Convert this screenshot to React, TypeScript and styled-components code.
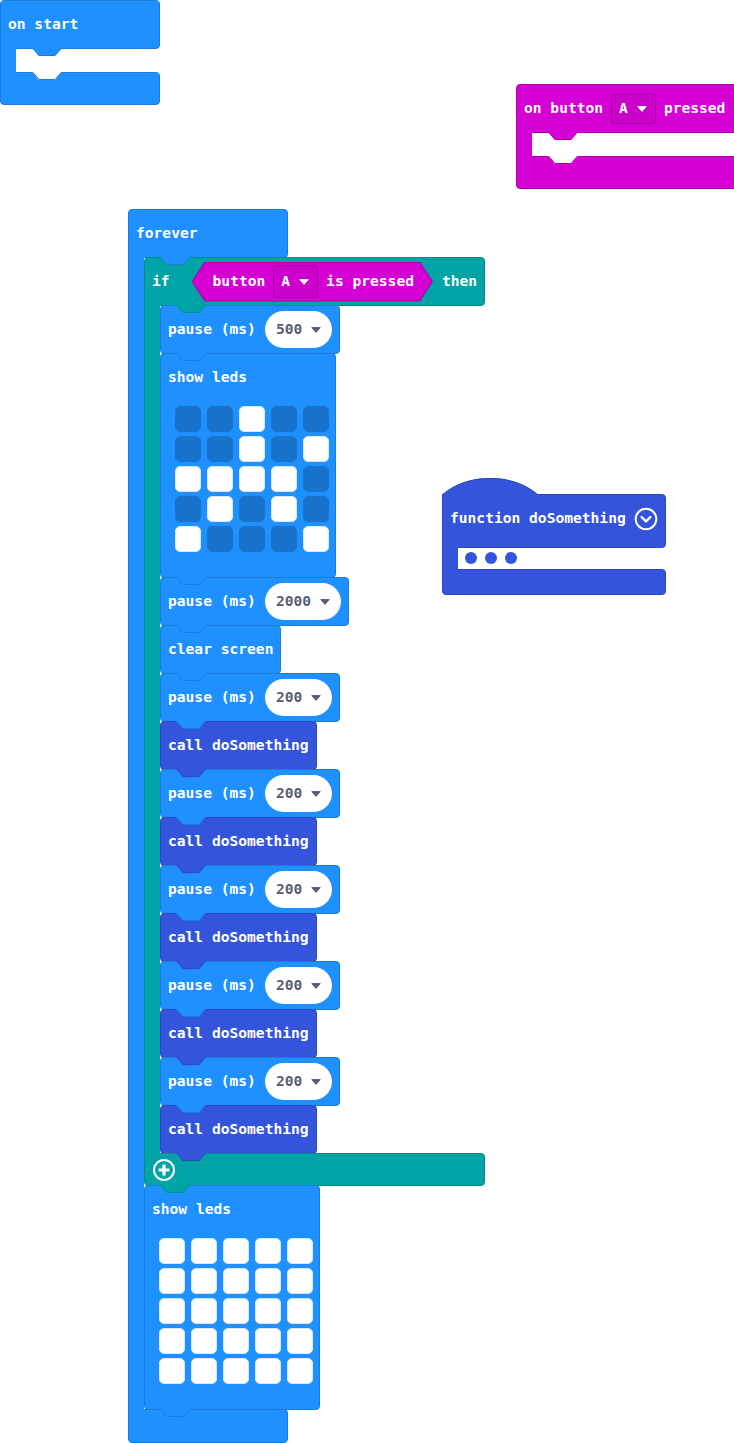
import React from "react";
import styled, { createGlobalStyle } from "styled-components";

type Tone = { fill: string; line: string };

const BASIC: Tone = { fill: "#1e90ff", line: "#1a7bd9" };
const LOGIC: Tone = { fill: "#00a4a6", line: "#008c8e" };
const INPUT: Tone = { fill: "#d400d4", line: "#b000b0" };
const FUNC: Tone = { fill: "#3455db", line: "#2a47bd" };
const LED_OFF = "#1873cc";
const FIELD_TEXT = "#575e75";

const GlobalStyle = createGlobalStyle`
  * { box-sizing: border-box; }
  html, body { margin: 0; background: #fff; }
  body { font-family: "DejaVu Sans Mono", "Liberation Mono", monospace; }
`;

const Canvas = styled.div`
  position: relative;
  width: 734px;
  height: 1443px;
  overflow: hidden;
  background: #fff;
`;

// top-level blocks sit on a free workspace canvas
const Placed = styled.div<{ $x: number; $y: number }>`
  position: absolute;
  left: ${(p) => p.$x}px;
  top: ${(p) => p.$y}px;
`;

const Label = styled.span`
  color: #fff;
  font-weight: 700;
  font-size: 14.6px;
  line-height: 1;
  white-space: pre;
`;

const CBlock = styled.div`
  display: flex;
  flex-direction: column;
  align-items: flex-start;
`;

const Head = styled.div<{ $t: Tone; $w?: number; $h?: number }>`
  position: relative;
  display: flex;
  align-items: center;
  gap: 8px;
  height: ${(p) => (p.$h ?? 48) + 1}px;
  ${(p) => (p.$w ? `min-width: ${p.$w}px;` : "")}
  margin-bottom: -1px;
  padding: 0 7px;
  background: ${(p) => p.$t.fill};
  border: 1px solid ${(p) => p.$t.line};
  border-radius: 4px 4px 4px 0;
`;

const FuncHead = styled(Head)`
  justify-content: space-between;
  padding-bottom: 5px;
  border-radius: 0 4px 4px 0;
`;

const Mouth = styled.div`
  display: flex;
  align-self: stretch;
`;

const Spine = styled.div<{ $t: Tone }>`
  position: relative;
  z-index: 1;
  flex: none;
  width: 16px;
  margin: -1px 0;
  background: ${(p) => p.$t.fill};
  border-left: 1px solid ${(p) => p.$t.line};
`;

const Stack = styled.div`
  display: flex;
  flex-direction: column;
  align-items: flex-start;
`;

const EmptySlot = styled.div`
  position: relative;
  width: 40px;
  height: 24px;
`;

const Foot = styled.div<{ $t: Tone; $w: number; $h: number }>`
  position: relative;
  display: flex;
  align-items: center;
  width: ${(p) => p.$w}px;
  height: ${(p) => p.$h + 1}px;
  margin-bottom: -1px;
  padding-left: 7px;
  background: ${(p) => p.$t.fill};
  border: 1px solid ${(p) => p.$t.line};
  border-radius: 0 4px 4px 4px;
`;

const Stmt = styled.div<{ $t: Tone }>`
  position: relative;
  display: flex;
  align-items: center;
  gap: 9px;
  height: 49px;
  margin-bottom: -1px;
  padding: 0 7px;
  background: ${(p) => p.$t.fill};
  border: 1px solid ${(p) => p.$t.line};
  border-radius: 4px;
`;

const LedBlock = styled.div`
  position: relative;
  display: flex;
  flex-direction: column;
  width: 176px;
  height: 225px;
  margin-bottom: -1px;
  background: ${BASIC.fill};
  border: 1px solid ${BASIC.line};
  border-radius: 4px;
`;

const LedTitle = styled.div`
  display: flex;
  align-items: center;
  height: 47px;
  padding-left: 7px;
`;

const LedGrid = styled.div`
  display: grid;
  grid-template-columns: repeat(5, 26px);
  grid-auto-rows: 26px;
  column-gap: 6px;
  row-gap: 4px;
  margin: 5px 0 0 14px;
`;

const Led = styled.div<{ $on: boolean }>`
  border-radius: 5px;
  background: ${(p) => (p.$on ? "#fff" : LED_OFF)};
  border: 1px solid ${(p) => (p.$on ? "#d6e9ff" : LED_OFF)};
`;

const Oval = styled.span`
  display: inline-flex;
  align-items: center;
  gap: 9px;
  height: 37px;
  padding: 0 11px;
  border-radius: 19px;
  background: #fff;
  color: ${FIELD_TEXT};
  font-weight: 700;
  font-size: 14.6px;
  line-height: 1;
`;

const Picker = styled.span<{ $h: number }>`
  display: inline-flex;
  align-items: center;
  gap: 9px;
  height: ${(p) => p.$h}px;
  padding: 0 8px 0 7px;
  border: 1px solid rgba(0, 0, 0, 0.18);
  border-radius: 4px;
  background: rgba(0, 0, 0, 0.04);
`;

const Hex = styled.span`
  position: relative;
  display: inline-flex;
  align-items: center;
  gap: 8px;
  height: 40px;
  margin: 0 1px 0 14px;
  padding: 0 19px 0 21px;
  background: ${INPUT.line};
  clip-path: polygon(13px 0, calc(100% - 13px) 0, 100% 50%, calc(100% - 13px) 100%, 13px 100%, 0 50%);

  &::before {
    content: "";
    position: absolute;
    inset: 1px 1.6px;
    z-index: -1;
    background: ${INPUT.fill};
    clip-path: polygon(12.4px 0, calc(100% - 12.4px) 0, 100% 50%, calc(100% - 12.4px) 100%, 12.4px 100%, 0 50%);
  }
`;

const ArgSlot = styled.div`
  display: flex;
  align-items: center;
  gap: 8px;
  height: 22px;
  padding-left: 7px;
`;

const Dot = styled.span`
  width: 12px;
  height: 12px;
  border-radius: 50%;
  background: ${FUNC.fill};
`;

const TabSvg = styled.svg<{ $x: number }>`
  position: absolute;
  top: 100%;
  left: ${(p) => p.$x}px;
  z-index: 2;
  overflow: visible;
`;

const HatSvg = styled.svg`
  position: relative;
  z-index: 1;
  display: block;
  margin-bottom: -2px;
`;

function Tab({ t, x, fill }: { t: Tone; x: number; fill?: string }) {
  return (
    <TabSvg $x={x} width="30" height="8" viewBox="0 0 30 8">
      <path d="M0 0 L7 8 H23 L30 0 Z" fill={fill ?? t.fill} />
      <path d="M0.5 0 L7 7.5 H23 L29.5 0" fill="none" stroke={t.line} />
    </TabSvg>
  );
}

function Caret({ color }: { color: string }) {
  return (
    <svg width="10" height="6" viewBox="0 0 10 6">
      <path d="M0.8 0.6 H9.2 L5 5.4 Z" fill={color} stroke={color} strokeLinejoin="round" />
    </svg>
  );
}

function PlusCircle() {
  return (
    <svg width="24" height="24" viewBox="0 0 24 24" fill="none" stroke="#fff">
      <circle cx="12" cy="12" r="10" strokeWidth="2" />
      <path d="M12 6.5v11M6.5 12h11" strokeWidth="3.2" />
    </svg>
  );
}

function ChevronCircle() {
  return (
    <svg width="24" height="24" viewBox="0 0 24 24" fill="none" stroke="#fff" strokeWidth="2">
      <circle cx="12" cy="12" r="10.3" />
      <path d="M7.6 10 L12 14.4 L16.4 10" strokeWidth="2.4" strokeLinecap="round" strokeLinejoin="round" />
    </svg>
  );
}

function Pause({ ms }: { ms: number }) {
  return (
    <Stmt $t={BASIC}>
      <Label>pause (ms)</Label>
      <Oval>
        {ms}
        <Caret color={FIELD_TEXT} />
      </Oval>
      <Tab t={BASIC} x={15} />
    </Stmt>
  );
}

function Call() {
  return (
    <Stmt $t={FUNC}>
      <Label>call doSomething</Label>
      <Tab t={FUNC} x={15} />
    </Stmt>
  );
}

function ShowLeds({ rows }: { rows: string[] }) {
  return (
    <LedBlock>
      <LedTitle>
        <Label>show leds</Label>
      </LedTitle>
      <LedGrid>
        {rows.flatMap((r, y) => r.split("").map((c, x) => <Led key={`${y}-${x}`} $on={c === "#"} />))}
      </LedGrid>
      <Tab t={BASIC} x={15} />
    </LedBlock>
  );
}

const arrow = ["..#..", "..#.#", "####.", ".#.#.", "#...#"];
const allOn = ["#####", "#####", "#####", "#####", "#####"];

export default function App() {
  return (
    <Canvas>
      <GlobalStyle />

      <Placed $x={0} $y={0}>
        <CBlock>
          <Head $t={BASIC} $w={160}>
            <Label>on start</Label>
            <Tab t={BASIC} x={31} />
          </Head>
          <Mouth>
            <Spine $t={BASIC} />
            <EmptySlot>
              <Tab t={BASIC} x={16} fill="#fff" />
            </EmptySlot>
          </Mouth>
          <Foot $t={BASIC} $w={160} $h={32} />
        </CBlock>
      </Placed>

      <Placed $x={516} $y={84}>
        <CBlock>
          <Head $t={INPUT} $w={222}>
            <Label>on button</Label>
            <Picker $h={31}>
              <Label>A</Label>
              <Caret color="#fff" />
            </Picker>
            <Label>pressed</Label>
            <Tab t={INPUT} x={31} />
          </Head>
          <Mouth>
            <Spine $t={INPUT} />
            <EmptySlot>
              <Tab t={INPUT} x={16} fill="#fff" />
            </EmptySlot>
          </Mouth>
          <Foot $t={INPUT} $w={222} $h={32} />
        </CBlock>
      </Placed>

      <Placed $x={128} $y={209}>
        <CBlock>
          <Head $t={BASIC} $w={160}>
            <Label>forever</Label>
            <Tab t={BASIC} x={31} />
          </Head>
          <Mouth>
            <Spine $t={BASIC} />
            <Stack>
              <CBlock>
                <Head $t={LOGIC}>
                  <Label>if</Label>
                  <Hex>
                    <Label>button</Label>
                    <Picker $h={33}>
                      <Label>A</Label>
                      <Caret color="#fff" />
                    </Picker>
                    <Label>is pressed</Label>
                  </Hex>
                  <Label>then</Label>
                  <Tab t={LOGIC} x={31} />
                </Head>
                <Mouth>
                  <Spine $t={LOGIC} />
                  <Stack>
                    <Pause ms={500} />
                    <ShowLeds rows={arrow} />
                    <Pause ms={2000} />
                    <Stmt $t={BASIC}>
                      <Label>clear screen</Label>
                      <Tab t={BASIC} x={15} />
                    </Stmt>
                    <Pause ms={200} />
                    <Call />
                    <Pause ms={200} />
                    <Call />
                    <Pause ms={200} />
                    <Call />
                    <Pause ms={200} />
                    <Call />
                    <Pause ms={200} />
                    <Call />
                  </Stack>
                </Mouth>
                <Foot $t={LOGIC} $w={341} $h={32}>
                  <PlusCircle />
                  <Tab t={LOGIC} x={15} />
                </Foot>
              </CBlock>
              <ShowLeds rows={allOn} />
            </Stack>
          </Mouth>
          <Foot $t={BASIC} $w={160} $h={33} />
        </CBlock>
      </Placed>

      <Placed $x={442} $y={478}>
        <CBlock>
          <HatSvg width="98" height="18" viewBox="0 0 98 18">
            <path d="M1 16.5 C25.5 -5.5 70.5 -5.5 96 16.5 L96 18 L1 18 Z" fill={FUNC.fill} />
            <path d="M0.5 16.5 C25.5 -5 70.5 -5 95.5 16.5" fill="none" stroke={FUNC.line} />
          </HatSvg>
          <FuncHead $t={FUNC} $w={224} $h={53}>
            <Label>function doSomething</Label>
            <ChevronCircle />
          </FuncHead>
          <Mouth>
            <Spine $t={FUNC} />
            <ArgSlot>
              <Dot />
              <Dot />
              <Dot />
            </ArgSlot>
          </Mouth>
          <Foot $t={FUNC} $w={224} $h={25} />
        </CBlock>
      </Placed>
    </Canvas>
  );
}
